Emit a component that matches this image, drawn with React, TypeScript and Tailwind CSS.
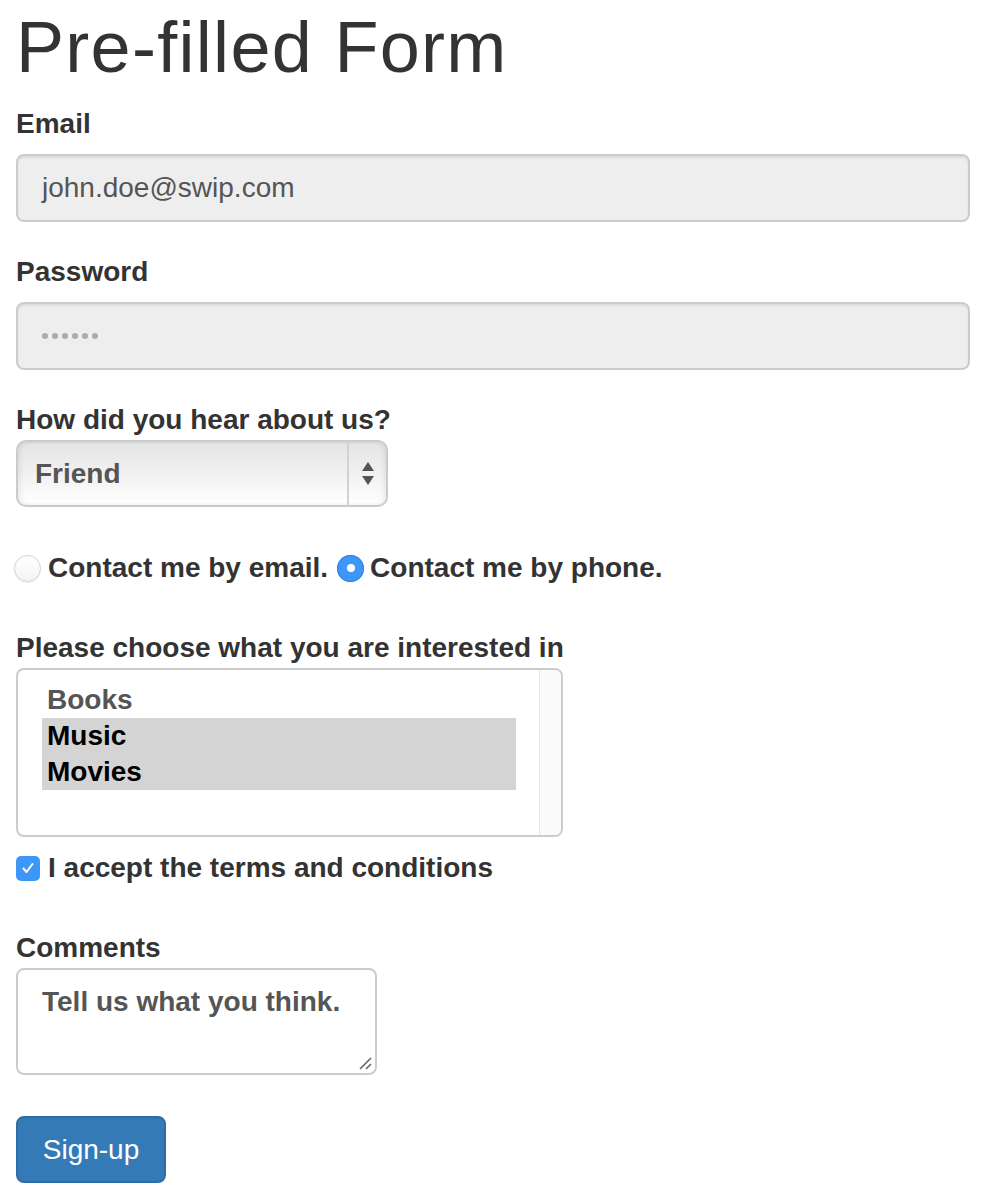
import React from "react";

const font = "font-['Liberation_Sans',Arial,sans-serif]";

const Label = ({ children, className = "" }: { children: React.ReactNode; className?: string }) => (
  <div className={`text-[28px] leading-[40px] font-bold text-[#333] ${className}`}>{children}</div>
);

const Radio = ({ checked }: { checked?: boolean }) =>
  checked ? (
    <span className="flex h-[27px] w-[27px] shrink-0 items-center justify-center rounded-full bg-[#3d97f6] shadow-[inset_0_0_0_1px_#2f86e8]">
      <span className="h-[8px] w-[8px] rounded-full bg-white" />
    </span>
  ) : (
    <span className="h-[27px] w-[27px] shrink-0 rounded-full border border-[#d2d2d2] bg-gradient-to-b from-white to-[#f4f4f4] shadow-[0_1px_1px_rgba(0,0,0,0.08)]" />
  );

export default function App() {
  return (
    <div className={`${font} flex min-h-[1196px] flex-col bg-white pt-[8px] pl-[16px] pr-[18px] text-[#333]`}>
      <h1 className="text-[72px] leading-[79px] font-normal tracking-[1.3px] text-[#333]">Pre-filled Form</h1>

      {/* email */}
      <Label className="mt-[17px] mb-[10px]">Email</Label>
      <div className="flex h-[68px] items-center rounded-[8px] border-2 border-[#ccc] bg-[#eee] px-[24px] text-[28px] text-[#555] shadow-[inset_0_2px_2px_rgba(0,0,0,0.075)]">
        john.doe@swip.com
      </div>

      {/* password */}
      <Label className="mt-[30px] mb-[10px]">Password</Label>
      <div className="flex h-[68px] items-center gap-[4px] rounded-[8px] border-2 border-[#ccc] bg-[#eee] px-[24px] shadow-[inset_0_2px_2px_rgba(0,0,0,0.075)]">
        {[0, 1, 2, 3, 4, 5].map((i) => (
          <span key={i} className="h-[6px] w-[6px] rounded-full bg-[#aaa]" />
        ))}
      </div>

      {/* select */}
      <Label className="mt-[30px]">How did you hear about us?</Label>
      <div className="flex h-[67px] w-[372px] overflow-hidden rounded-[10px] border-2 border-[#cbcbcb] bg-gradient-to-b from-[#e4e4e4] via-[#f1f1f1] to-white shadow-[inset_3px_0_4px_rgba(0,0,0,0.06),inset_-3px_0_4px_rgba(0,0,0,0.06)]">
        <div className="flex flex-1 items-center pl-[17px] text-[28px] font-bold text-[#555]">Friend</div>
        <div className="flex w-[39px] flex-col items-center justify-center gap-[5px] border-l-2 border-[#d2d2d2]">
          <svg width="12" height="9" viewBox="0 0 12 9">
            <path d="M6 0L12 9H0Z" fill="#555" />
          </svg>
          <svg width="12" height="9" viewBox="0 0 12 9">
            <path d="M0 0H12L6 9Z" fill="#555" />
          </svg>
        </div>
      </div>

      {/* radios */}
      <div className="mt-[41px] flex h-[40px] items-center text-[28px] leading-[40px] font-bold text-[#333]">
        <div className="-ml-[2px] flex items-center gap-[7px]">
          <Radio />
          <span>Contact me by email.</span>
        </div>
        <div className="ml-[9px] flex items-center gap-[6px]">
          <Radio checked />
          <span>Contact me by phone.</span>
        </div>
      </div>

      {/* listbox */}
      <Label className="mt-[40px]">Please choose what you are interested in</Label>
      <div className="flex h-[169px] w-[547px] overflow-hidden rounded-[8px] border-2 border-[#ccc] bg-white">
        <div className="flex flex-1 flex-col pt-[12px] pl-[24px] pr-[23px] text-[28px] leading-[36px] font-bold">
          <div className="pl-[5px] text-[#555]">Books</div>
          <div className="bg-[#d4d4d4] pl-[5px] text-black">Music</div>
          <div className="bg-[#d4d4d4] pl-[5px] text-black">Movies</div>
        </div>
        <div className="w-[22px] border-l border-[#e6e6e6] bg-[#fafafa]" />
      </div>

      {/* checkbox */}
      <div className="mt-[11px] flex h-[40px] items-center gap-[8px] text-[28px] leading-[40px] font-bold text-[#333]">
        <span className="flex h-[25px] w-[24px] items-center justify-center rounded-[5px] bg-[#3d97f6]">
          <svg width="14" height="14" viewBox="0 0 14 14">
            <path d="M2.5 7.5L5.5 11L11.5 3" fill="none" stroke="white" strokeWidth="2" strokeLinecap="round" strokeLinejoin="round" />
          </svg>
        </span>
        <span>I accept the terms and conditions</span>
      </div>

      {/* textarea */}
      <Label className="mt-[40px]">Comments</Label>
      <div className="relative h-[107px] w-[361px] rounded-[8px] border-2 border-[#ccc] bg-white px-[24px] pt-[12px] text-[28px] leading-[40px] font-bold text-[#555]">
        Tell us what you think.
        <svg className="absolute right-[3px] bottom-[3px]" width="14" height="14" viewBox="0 0 14 14">
          <path d="M2 13L13 2M8 13L13 8" stroke="#666" strokeWidth="1.6" />
        </svg>
      </div>

      {/* submit */}
      <button className="mt-[41px] flex h-[67px] w-[150px] items-center justify-center rounded-[8px] border-2 border-[#2e6da4] bg-[#337ab7] text-[28px] text-white">
        Sign-up
      </button>
    </div>
  );
}
